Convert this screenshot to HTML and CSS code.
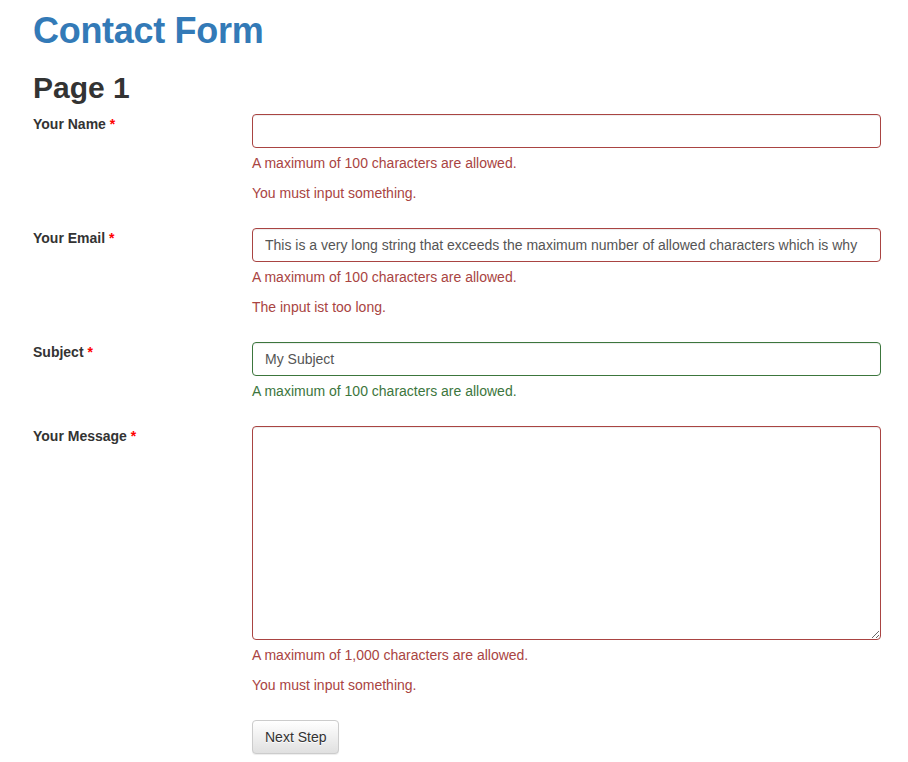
FILE: index.html
```html
<!DOCTYPE html>
<html>
<head>
<meta charset="utf-8">
<title>Contact Form</title>
<link rel="stylesheet" href="styles.css">
</head>
<body>
<div class="container">
  <h1 class="title">Contact Form</h1>
  <h2 class="page">Page 1</h2>
  <form class="form">
    <div class="form-group has-error">
      <label class="control-label">Your Name <span class="req">*</span></label>
      <div class="field">
        <input class="form-control" type="text" value="">
        <span class="help-block">A maximum of 100 characters are allowed.</span>
        <span class="help-block">You must input something.</span>
      </div>
    </div>
    <div class="form-group has-error">
      <label class="control-label">Your Email <span class="req">*</span></label>
      <div class="field">
        <input class="form-control" type="text" value="This is a very long string that exceeds the maximum number of allowed characters which is why">
        <span class="help-block">A maximum of 100 characters are allowed.</span>
        <span class="help-block">The input ist too long.</span>
      </div>
    </div>
    <div class="form-group has-success">
      <label class="control-label">Subject <span class="req">*</span></label>
      <div class="field">
        <input class="form-control" type="text" value="My Subject">
        <span class="help-block">A maximum of 100 characters are allowed.</span>
      </div>
    </div>
    <div class="form-group has-error">
      <label class="control-label">Your Message <span class="req">*</span></label>
      <div class="field">
        <textarea class="form-control textarea"></textarea>
        <span class="help-block">A maximum of 1,000 characters are allowed.</span>
        <span class="help-block">You must input something.</span>
      </div>
    </div>
    <div class="form-group">
      <div class="spacer"></div>
      <div class="field">
        <button type="button" class="btn">Next Step</button>
      </div>
    </div>
  </form>
</div>
</body>
</html>
```

FILE: styles.css
```css
* { box-sizing: border-box; }
html, body { margin: 0; padding: 0; background: #fff; }
body {
  font-family: "Liberation Sans", Arial, Helvetica, sans-serif;
  font-size: 14px;
  line-height: 20px;
  color: #333;
}
.container {
  padding: 0 27px 0 33px;
}
.title {
  font-size: 36px;
  line-height: 39.6px;
  font-weight: 700;
  letter-spacing: -0.3px;
  color: #337ab7;
  margin: 11px 0 10px;
}
.page {
  font-size: 30px;
  line-height: 33px;
  font-weight: 700;
  color: #333;
  margin: 20px 0 10px;
}
.form-group {
  display: grid;
  grid-template-columns: 204px 1fr;
  column-gap: 15px;
  margin-bottom: 15px;
}
.control-label {
  font-weight: 700;
  font-size: 14px;
  line-height: 20px;
  color: #333;
  padding-top: 0;
}
.req { color: #f00; }
.field { display: flex; flex-direction: column; align-items: flex-start; }
.form-control {
  display: block;
  width: 100%;
  height: 34px;
  padding: 6px 12px;
  font-family: inherit;
  font-size: 14px;
  line-height: 20px;
  color: #555;
  background: #fff;
  border: 1px solid #ccc;
  border-radius: 4px;
  box-shadow: inset 0 1px 1px rgba(0,0,0,.075);
  outline: none;
  margin: 0;
}
.textarea {
  height: 214px;
  resize: vertical;
}
.help-block {
  display: block;
  margin-top: 5px;
  margin-bottom: 10px;
  line-height: 20px;
}
.help-block + .help-block { margin-top: 0; }
.has-error .form-control { border-color: #a94442; }
.has-error .help-block { color: #a94442; }
.has-success .form-control { border-color: #3c763d; }
.has-success .help-block { color: #3c763d; }
.btn {
  display: inline-block;
  height: 34px;
  padding: 6px 12px;
  font-family: inherit;
  font-size: 14px;
  line-height: 20px;
  color: #333;
  background-image: linear-gradient(to bottom, #fff 0, #e0e0e0 100%);
  border: 1px solid #ccc;
  border-radius: 4px;
  box-shadow: inset 0 1px 0 rgba(255,255,255,.15), 0 1px 1px rgba(0,0,0,.075);
  text-shadow: 0 1px 0 #fff;
  cursor: pointer;
}
```
